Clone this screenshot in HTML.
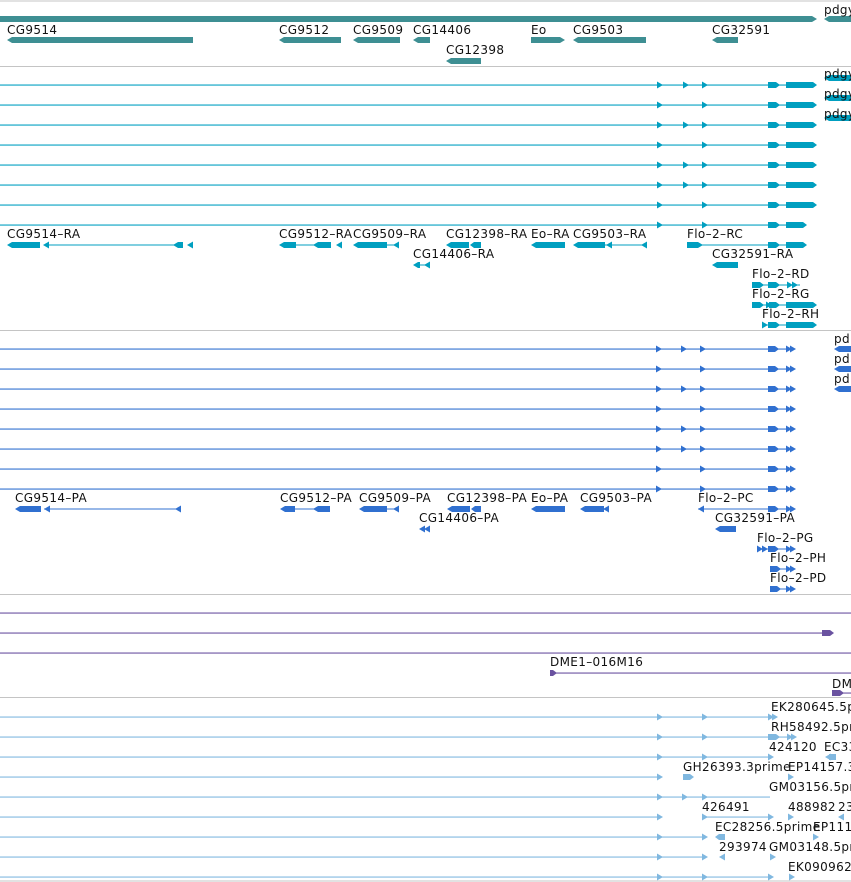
<!DOCTYPE html><html><head><meta charset="utf-8"><style>
html,body{margin:0;padding:0;background:#fff;width:851px;height:882px;overflow:hidden}
svg text{font-family:"DejaVu Sans","Liberation Sans",sans-serif;font-size:12px;fill:#111;letter-spacing:0.35px}
</style></head><body>
<svg width="851" height="882" xmlns="http://www.w3.org/2000/svg">
<defs>
<polygon id="r" points="0,-3.5 6,0 0,3.5"/>
<polygon id="l" points="6,-3.5 0,0 6,3.5"/>
<g id="tr">
<rect x="0" y="-0.5" width="790" height="1.1" stroke="none"/>
<use href="#r" x="657"/><use href="#r" x="683"/><use href="#r" x="702"/>
<polygon points="768,-3 776,-3 780,0 776,3 768,3"/>
<polygon points="786,-3 813,-3 817,0 813,3 786,3"/>
</g>
<g id="tr2">
<rect x="0" y="-0.5" width="790" height="1.1" stroke="none"/>
<use href="#r" x="657"/><use href="#r" x="702"/>
<polygon points="768,-3 776,-3 780,0 776,3 768,3"/>
<polygon points="786,-3 813,-3 817,0 813,3 786,3"/>
</g>
<g id="pr">
<rect x="0" y="-0.5" width="790" height="1.1" stroke="none"/>
<use href="#r" x="656"/><use href="#r" x="681"/><use href="#r" x="700"/>
<polygon points="768,-3 775,-3 779,0 775,3 768,3"/>
<use href="#r" x="786"/><use href="#r" x="790"/>
</g>
<g id="pr2">
<rect x="0" y="-0.5" width="790" height="1.1" stroke="none"/>
<use href="#r" x="656"/><use href="#r" x="700"/>
<polygon points="768,-3 775,-3 779,0 775,3 768,3"/>
<use href="#r" x="786"/><use href="#r" x="790"/>
</g>
</defs>
<g fill="#c4c4c4">
<rect x="0" y="0.5" width="851" height="1"/><rect x="0" y="66" width="851" height="1"/>
<rect x="0" y="330" width="851" height="1"/><rect x="0" y="594" width="851" height="1"/>
<rect x="0" y="697" width="851" height="1"/><rect x="0" y="880.5" width="851" height="1"/>
</g>
<g fill="#3e8f93">
<polygon points="0,16 812,16 817,19 812,22 0,22"/>
<polygon points="824,19 829,16 851,16 851,22 829,22"/>
<polygon points="7,40 12,37 193,37 193,43 12,43"/>
<polygon points="279,40 284,37 341,37 341,43 284,43"/>
<polygon points="353,40 358,37 400,37 400,43 358,43"/>
<polygon points="413,40 418,37 430,37 430,43 418,43"/>
<polygon points="446,61 451,58 481,58 481,64 451,64"/>
<polygon points="531,37 560,37 565,40 560,43 531,43"/>
<polygon points="573,40 578,37 646,37 646,43 578,43"/>
<polygon points="712,40 717,37 738,37 738,43 717,43"/>
</g>
<text x="824" y="14">pdgy</text>
<text x="7" y="34">CG9514</text><text x="279" y="34">CG9512</text><text x="353" y="34">CG9509</text>
<text x="413" y="34">CG14406</text><text x="531" y="34">Eo</text><text x="573" y="34">CG9503</text>
<text x="712" y="34">CG32591</text><text x="446" y="54">CG12398</text>
<g fill="#009fc0">
<use href="#tr" y="85"/><use href="#tr2" y="105"/><use href="#tr" y="125"/><use href="#tr2" y="145"/>
<use href="#tr" y="165"/><use href="#tr" y="185"/><use href="#tr2" y="205"/>
<g transform="translate(0,225)"><rect x="0" y="-0.5" width="790" height="1.1"/><use href="#r" x="657"/><use href="#r" x="702"/>
<polygon points="768,-3 776,-3 780,0 776,3 768,3"/><polygon points="786,-3 803,-3 807,0 803,3 786,3"/></g>
</g>
<g fill="#009fc0">
<polygon points="824,78 829,75 851,75 851,81 829,81"/>
<polygon points="824,98 829,95 851,95 851,101 829,101"/>
<polygon points="824,118 829,115 851,115 851,121 829,121"/>
</g>
<text x="824" y="78">pdgy</text><text x="824" y="98">pdgy</text><text x="824" y="118">pdgy</text>
<g fill="#009fc0">
<rect x="44" y="244.5" width="132" height="1"/>
<polygon points="7,245 12,242 40,242 40,248 12,248"/><use href="#l" x="43" y="245"/>
<polygon points="173,245 178,242 183,242 183,248 178,248"/><use href="#l" x="187" y="245"/>
<rect x="280" y="244.5" width="50" height="1"/>
<polygon points="279,245 284,242 296,242 296,248 284,248"/><polygon points="313,245 318,242 331,242 331,248 318,248"/><use href="#l" x="336" y="245"/>
<polygon points="353,245 358,242 387,242 387,248 358,248"/><rect x="387" y="244.5" width="10" height="1"/><use href="#l" x="393" y="245"/>
<polygon points="413,265 418,262 420,262 420,268 418,268"/><rect x="418" y="264.5" width="10" height="1"/><use href="#l" x="424" y="265"/>
<polygon points="446,245 451,242 469,242 469,248 451,248"/><polygon points="470,245 474,242 481,242 481,248 474,248"/>
<polygon points="531,245 536,242 565,242 565,248 536,248"/>
<polygon points="573,245 578,242 605,242 605,248 578,248"/><rect x="605" y="244.5" width="40" height="1"/><use href="#l" x="606" y="245"/><use href="#l" x="641" y="245"/>
<polygon points="687,242 698,242 703,245 698,248 687,248"/><rect x="687" y="244.5" width="100" height="1"/>
<polygon points="768,242 776,242 780,245 776,248 768,248"/><polygon points="786,242 803,242 807,245 803,248 786,248"/>
<polygon points="712,265 717,262 738,262 738,268 717,268"/>
<rect x="752" y="284.5" width="48" height="1"/><polygon points="752,282 760,282 764,285 760,288 752,288"/><polygon points="768,282 776,282 780,285 776,288 768,288"/><use href="#r" x="787" y="285"/><use href="#r" x="792" y="285"/>
<rect x="752" y="304.5" width="60" height="1"/><polygon points="752,302 760,302 764,305 760,308 752,308"/><use href="#r" x="766" y="305"/><polygon points="769,302 776,302 780,305 776,308 769,308"/><polygon points="786,302 813,302 817,305 813,308 786,308"/>
<rect x="762" y="324.5" width="50" height="1"/><use href="#r" x="762" y="325"/><polygon points="768,322 776,322 780,325 776,328 768,328"/><polygon points="786,322 813,322 817,325 813,328 786,328"/>
</g>
<text x="7" y="238">CG9514–RA</text><text x="279" y="238">CG9512–RA</text><text x="353" y="238">CG9509–RA</text>
<text x="446" y="238">CG12398–RA</text><text x="531" y="238">Eo–RA</text><text x="573" y="238">CG9503–RA</text>
<text x="687" y="238">Flo–2–RC</text><text x="413" y="258">CG14406–RA</text><text x="712" y="258">CG32591–RA</text>
<text x="752" y="278">Flo–2–RD</text><text x="752" y="298">Flo–2–RG</text><text x="762" y="318">Flo–2–RH</text>
<g fill="#3070d0">
<use href="#pr" y="349"/><use href="#pr2" y="369"/><use href="#pr" y="389"/><use href="#pr2" y="409"/>
<use href="#pr" y="429"/><use href="#pr" y="449"/><use href="#pr2" y="469"/><use href="#pr2" y="489"/>
</g>
<g fill="#3070d0">
<polygon points="834,349 839,346 851,346 851,352 839,352"/><polygon points="834,369 839,366 851,366 851,372 839,372"/><polygon points="834,389 839,386 851,386 851,392 839,392"/>
<polygon points="15,509 20,506 41,506 41,512 20,512"/><rect x="44" y="508.5" width="135" height="1"/><use href="#l" x="44" y="509"/><use href="#l" x="175" y="509"/>
<polygon points="280,509 285,506 295,506 295,512 285,512"/><rect x="295" y="508.5" width="20" height="1"/><polygon points="313,509 318,506 330,506 330,512 318,512"/>
<polygon points="359,509 364,506 387,506 387,512 364,512"/><rect x="387" y="508.5" width="10" height="1"/><use href="#l" x="393" y="509"/>
<use href="#l" x="419" y="529"/><use href="#l" x="424" y="529"/>
<polygon points="447,509 452,506 470,506 470,512 452,512"/><polygon points="471,509 475,506 481,506 481,512 475,512"/>
<polygon points="531,509 536,506 565,506 565,512 536,512"/>
<polygon points="580,509 585,506 604,506 604,512 585,512"/><use href="#l" x="603" y="509"/>
<use href="#l" x="698" y="509"/><rect x="698" y="508.5" width="95" height="1"/><polygon points="768,506 775,506 779,509 775,512 768,512"/><use href="#r" x="786" y="509"/><use href="#r" x="790" y="509"/>
<polygon points="715,529 720,526 736,526 736,532 720,532"/>
<rect x="757" y="548.5" width="36" height="1"/><use href="#r" x="757" y="549"/><use href="#r" x="762" y="549"/><polygon points="768,546 775,546 779,549 775,552 768,552"/><use href="#r" x="786" y="549"/><use href="#r" x="790" y="549"/>
<rect x="770" y="568.5" width="22" height="1"/><polygon points="770,566 777,566 781,569 777,572 770,572"/><use href="#r" x="786" y="569"/><use href="#r" x="790" y="569"/>
<rect x="770" y="588.5" width="22" height="1"/><polygon points="770,586 777,586 781,589 777,592 770,592"/><use href="#r" x="786" y="589"/><use href="#r" x="790" y="589"/>
</g>
<text x="834" y="343">pd</text><text x="834" y="363">pd</text><text x="834" y="383">pd</text>
<text x="15" y="502">CG9514–PA</text><text x="280" y="502">CG9512–PA</text><text x="359" y="502">CG9509–PA</text>
<text x="447" y="502">CG12398–PA</text><text x="531" y="502">Eo–PA</text><text x="580" y="502">CG9503–PA</text>
<text x="698" y="502">Flo–2–PC</text><text x="419" y="522">CG14406–PA</text><text x="715" y="522">CG32591–PA</text>
<text x="757" y="542">Flo–2–PG</text><text x="770" y="562">Flo–2–PH</text><text x="770" y="582">Flo–2–PD</text>
<g fill="#6a52a0">
<rect x="0" y="612.5" width="851" height="1.1"/><rect x="0" y="632.5" width="825" height="1.1"/><rect x="0" y="652.5" width="851" height="1.1"/>
<rect x="550" y="672.5" width="301" height="1.1"/><rect x="832" y="692.5" width="19" height="1.1"/>
<polygon points="822,630 830,630 834,633 830,636 822,636"/>
<polygon points="550,670 553,670 557,673 553,676 550,676"/>
<polygon points="832,690 840,690 844,693 840,696 832,696"/>
</g>
<text x="550" y="666">DME1–016M16</text><text x="832" y="688">DM</text>
<g fill="#80b8e0">
<g transform="translate(0,717)"><rect y="-0.5" width="768" height="1.1"/><use href="#r" x="657"/><use href="#r" x="702"/><use href="#r" x="768"/><use href="#r" x="772"/></g>
<g transform="translate(0,737)"><rect y="-0.5" width="795" height="1.1"/><use href="#r" x="657"/><use href="#r" x="702"/><polygon points="768,-3 776,-3 780,0 776,3 768,3"/><use href="#r" x="787"/><use href="#r" x="791"/></g>
<g transform="translate(0,757)"><rect y="-0.5" width="770" height="1.1"/><use href="#r" x="657"/><use href="#r" x="702"/><use href="#r" x="768"/><use href="#l" x="825"/><rect x="829" y="-3" width="7" height="6"/></g>
<g transform="translate(0,777)"><rect y="-0.5" width="660" height="1.1"/><use href="#r" x="657"/><polygon points="683,-3 690,-3 694,0 690,3 683,3"/><use href="#r" x="788"/></g>
<g transform="translate(0,797)"><rect y="-0.5" width="770" height="1.1"/><use href="#r" x="657"/><use href="#r" x="682"/><use href="#r" x="702"/></g>
<g transform="translate(0,817)"><rect y="-0.5" width="660" height="1.1"/><use href="#r" x="657"/><rect x="702" y="-0.5" width="68" height="1.1"/><use href="#r" x="702"/><use href="#r" x="768"/><use href="#r" x="788"/><use href="#l" x="838"/></g>
<g transform="translate(0,837)"><rect y="-0.5" width="702" height="1.1"/><use href="#r" x="657"/><use href="#r" x="702"/><polygon points="715,0 719,-3 725,-3 725,3 719,3"/><use href="#r" x="813"/></g>
<g transform="translate(0,857)"><rect y="-0.5" width="702" height="1.1"/><use href="#r" x="657"/><use href="#r" x="702"/><use href="#l" x="719"/><use href="#r" x="770"/></g>
<g transform="translate(0,877)"><rect y="-0.5" width="770" height="1.1"/><use href="#r" x="657"/><use href="#r" x="702"/><use href="#r" x="768"/><use href="#r" x="789"/></g>
</g>
<text x="771" y="711">EK280645.5prime</text><text x="771" y="731">RH58492.5prime</text>
<text x="769" y="751">424120</text><text x="824" y="751">EC33</text>
<text x="683" y="771">GH26393.3prime</text><text x="788" y="771">EP14157.3prime</text>
<text x="769" y="791">GM03156.5prime</text>
<text x="702" y="811">426491</text><text x="788" y="811">488982</text><text x="838" y="811">23</text>
<text x="715" y="831">EC28256.5prime</text><text x="813" y="831">EP111</text>
<text x="719" y="851">293974</text><text x="769" y="851">GM03148.5prime</text>
<text x="788" y="871">EK090962</text>
</svg>
</body></html>
